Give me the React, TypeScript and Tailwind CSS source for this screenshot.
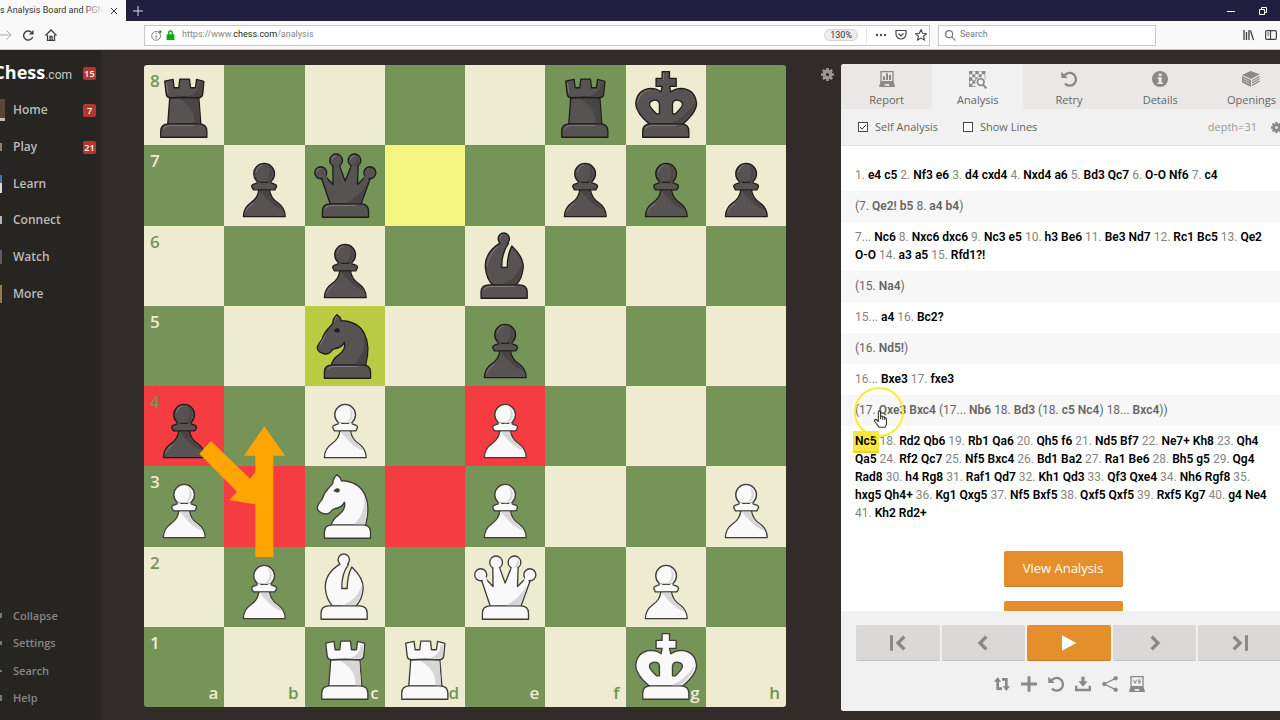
import type { ReactNode } from "react";
import clsx from "clsx";

type Kind = "p" | "r" | "n" | "b" | "q" | "k";

const files = ["a", "b", "c", "d", "e", "f", "g", "h"];
const ranks = [8, 7, 6, 5, 4, 3, 2, 1];

// upper case = white, lower case = black
const position = [
  "r....rk.",
  ".pq..ppp",
  "..p.b...",
  "..n.p...",
  "p.P.P...",
  "P.N.P..P",
  ".PB.Q.P.",
  "..RR..K.",
];

const highlights: Record<string, string> = {
  d7: "bg-[#f5f682]",
  c5: "bg-[#b9ca43]",
  a4: "bg-[#f43c41]",
  e4: "bg-[#f43c41]",
  b3: "bg-[#f43c41]",
  d3: "bg-[#f43c41]",
};

const navItems = [
  { label: "Home", badge: "7", mark: "h-[22px] w-[5px] bg-[#5b4536] border-b-3 border-[#c9bdb3]" },
  { label: "Play", badge: "21", mark: "h-[8px] w-[2px] bg-[#8d806c]" },
  { label: "Learn", mark: "h-[18px] w-[2px] bg-[#d5ddd5] border-t-8 border-[#4a6ea8]" },
  { label: "Connect", mark: "h-[8px] w-[2px] bg-[#b5b5b4]" },
  { label: "Watch", mark: "h-[14px] w-[2px] bg-[#5e5d5b]" },
  { label: "More", mark: "h-[18px] w-[2px] bg-[#8f7a52]" },
];

const footerItems = [
  { label: "Collapse", mark: "h-[5px]" },
  { label: "Settings", mark: "h-[4px]" },
  { label: "Search", mark: "h-[2px]" },
  { label: "Help", mark: "h-[6px]" },
];

const moveBlocks = [
  { text: "1. e4 c5 2. Nf3 e6 3. d4 cxd4 4. Nxd4 a6 5. Bd3 Qc7 6. O-O Nf6 7. c4" },
  { text: "(7. Qe2! b5 8. a4 b4)", variation: true },
  { text: "7... Nc6 8. Nxc6 dxc6 9. Nc3 e5 10. h3 Be6 11. Be3 Nd7 12. Rc1 Bc5 13. Qe2\nO-O 14. a3 a5 15. Rfd1?!" },
  { text: "(15. Na4)", variation: true },
  { text: "15... a4 16. Bc2?" },
  { text: "(16. Nd5!)", variation: true },
  { text: "16... Bxe3 17. fxe3" },
  { text: "(17. Qxe3 Bxc4 (17... Nb6 18. Bd3 (18. c5 Nc4) 18... Bxc4))", variation: true, pointer: true },
  {
    text: "Nc5 18. Rd2 Qb6 19. Rb1 Qa6 20. Qh5 f6 21. Nd5 Bf7 22. Ne7+ Kh8 23. Qh4\nQa5 24. Rf2 Qc7 25. Nf5 Bxc4 26. Bd1 Ba2 27. Ra1 Be6 28. Bh5 g5 29. Qg4\nRad8 30. h4 Rg8 31. Raf1 Qd7 32. Kh1 Qd3 33. Qf3 Qxe4 34. Nh6 Rgf8 35.\nhxg5 Qh4+ 36. Kg1 Qxg5 37. Nf5 Bxf5 38. Qxf5 Qxf5 39. Rxf5 Kg7 40. g4 Ne4\n41. Kh2 Rd2+",
    current: "Nc5",
  },
];

function Base({ x = 52 }: { x?: number }) {
  return <path d={`M${x} 216v-18q0-22 24-22h90q24 0 24 22v18z`} />;
}

const shapes: Record<Kind, { body: ReactNode; shade: string; shine: string }> = {
  p: {
    body: (
      <>
        <path d="M105 134Q103 158 82 172Q59 188 59 214H184Q184 188 161 172Q140 158 137 134Z" />
        <circle cx="121" cy="86" r="31" />
        <path d="M104 112L88 118Q83 120 84 125L89 134H153L158 125Q159 120 154 118L138 112Z" />
        <path d="M102 108Q121 124 140 108V118H102Z" stroke="none" />
      </>
    ),
    shade: "M107 136H135Q138 158 158 172Q170 180 176 194Q150 184 134 166Q120 152 107 136ZM132 60Q149 76 142 98Q132 110 118 114Q148 96 132 60Z",
    shine: "M98 80Q101 64 116 60M66 200Q72 184 88 176",
  },
  r: {
    body: (
      <>
        <path d="M78 98L72 178H171L165 98Z" />
        <path d="M63 48L88 43L91 68H105L108 42H137L140 68H155L158 43L180 49L177 84Q176 98 162 98Q121 94 81 98Q68 98 67 84Z" />
        <Base x={51} />
      </>
    ),
    shade: "M108 102H163L169 174H152Q154 130 108 102ZM177 54L174 82Q172 94 160 95L136 93Q166 84 167 54Z",
    shine: "M68 54L72 82M60 190Q66 181 84 181H150",
  },
  n: {
    body: (
      <>
        <path d="M79 178Q84 158 102 146Q124 130 119 108Q112 124 92 127Q82 130 77 138Q66 147 52 141Q36 134 38 122Q42 112 52 100Q58 80 72 66L84 52Q84 38 96 26Q106 32 110 44Q160 46 178 82Q198 120 182 178Z" />
        <Base x={59} />
      </>
    ),
    shade: "M176 84Q194 124 180 174H148Q186 138 176 84Z",
    shine: "M89 47Q90 36 96 31M46 114Q58 96 62 86M68 190Q74 181 92 181H160",
  },
  b: {
    body: (
      <>
        <path d="M104 52C70 74 60 100 62 125Q65 158 84 177H153Q172 158 175 125C177 98 160 78 141 60Q128 84 127 124H111Q110 80 131 52Z" />
        <circle cx="117" cy="38" r="17" />
        <path d="M107 47H127V57H107Z" stroke="none" />
        <Base x={49} />
      </>
    ),
    shade: "M171 112Q174 150 150 174H112Q158 158 171 112Z",
    shine: "M68 118Q70 88 98 62M106 36Q108 28 114 27M58 190Q64 181 82 181H148",
  },
  q: {
    body: (
      <>
        <path d="M50 98L77 178H168L197 98L182 94L158 118L160 58H141L121 108L103 58H84L85 118L62 94Z" />
        <circle cx="48" cy="83" r="18" />
        <circle cx="94" cy="46" r="19" />
        <circle cx="149" cy="46" r="19" />
        <circle cx="195" cy="83" r="18" />
        <path d="M52 93L64 90L68 104L56 108ZM87 58H101L105 70H87ZM142 58H157V72H138ZM181 90L193 94L188 108L176 104Z" stroke="none" />
        <Base x={53} />
      </>
    ),
    shade: "M188 112L166 174H124Q160 158 188 112ZM158 34Q168 50 156 60L144 62Q160 54 158 34Z",
    shine: "M36 80Q38 70 47 70M82 42Q85 33 93 32M137 42Q140 33 148 32M62 190Q68 181 86 181H152",
  },
  k: {
    body: (
      <>
        <path
          fillRule="evenodd"
          d="M109 20H131V40H151V64H131L135 80Q150 70 168 70Q208 74 212 115Q212 142 169 178H72Q30 142 30 115Q34 74 74 70Q92 70 106 80L109 64H91V40H109ZM101 146V116Q98 104 86 105Q68 108 72 122Q76 130 92 146ZM140 146V116Q143 104 155 105Q173 108 169 122Q165 130 149 146Z"
        />
        <Base x={51} />
      </>
    ),
    shade: "M206 112Q204 142 164 174H138Q184 154 206 112Z",
    shine: "M36 112Q40 80 74 75M113 44V25M60 190Q66 181 84 181H150",
  },
};

function Piece({ code }: { code: string }) {
  const kind = code.toLowerCase() as Kind;
  const white = code !== kind;
  const shape = shapes[kind];
  return (
    <svg viewBox="1 0 240 240" className="h-full w-full" strokeLinejoin="round">
      <g fill={white ? "#f9f9f9" : "#565352"} stroke={white ? "#3f3d39" : "#1f1d1c"} strokeWidth="4">
        {shape.body}
      </g>
      <path d={shape.shade} fill={white ? "#d6d6d6" : "#484544"} />
      {!white && <path d={shape.shine} fill="none" stroke="#7b7877" strokeWidth="3" strokeLinecap="round" />}
      {kind === "n" && <path d="M86 75Q94 62 104 69Q108 80 96 79Q90 78 86 75Z" fill={white ? "#3f3d39" : "#1f1d1c"} />}
    </svg>
  );
}

function Board() {
  return (
    <div className="relative grid aspect-square h-full shrink-0 grid-cols-8 grid-rows-8 overflow-hidden rounded-[3px]">
      {ranks.map((rank, r) =>
        files.map((file, f) => {
          const light = (r + f) % 2 === 0;
          const code = position[r][f];
          return (
            <div
              key={file + rank}
              className={clsx(
                "relative min-h-0 min-w-0 text-[17px] leading-5 font-semibold",
                highlights[file + rank] ?? (light ? "bg-[#edecd1]" : "bg-[#769457]"),
                light ? "text-[#769457]" : "text-[#edecd1]",
              )}
            >
              {code !== "." && <Piece code={code} />}
              {f === 0 && <span className="absolute top-1.5 left-1.5">{rank}</span>}
              {r === 7 && <span className="absolute right-1.5 bottom-1">{file}</span>}
            </div>
          );
        }),
      )}
      <svg viewBox="0 0 1926 1926" className="absolute inset-0 h-full w-full" fill="#ffa500">
        <path d="M201 1128L318 1241L340 1215L361 1323L256 1305L279 1280L166 1166Z" />
        <path d="M334 1476V1172H300L361 1084L423 1172H388V1476Z" />
      </svg>
    </div>
  );
}

function Undo({ className }: { className: string }) {
  return (
    <svg viewBox="0 0 48 48" className={className} fill="none" stroke="currentColor" strokeWidth="7">
      <path d="M9 16A19 19 0 1 1 12 38" />
      <path d="M1 2V21H20Z" fill="currentColor" stroke="none" />
    </svg>
  );
}

function Gear({ className }: { className: string }) {
  return (
    <svg viewBox="0 0 24 24" className={className} fill="none" stroke="currentColor">
      <circle cx="12" cy="12" r="6" strokeWidth="6" />
      <path d="M12 0V5M12 19V24M0 12H5M19 12H24M3.500 3.500L7 7M17 17L20.500 20.500M3.500 20.500L7 17M17 7L20.500 3.500" strokeWidth="5" />
    </svg>
  );
}

function ReportIcon() {
  return (
    <svg viewBox="0 0 48 48" className="size-4" fill="currentColor">
      <path fillRule="evenodd" d="M4 0H44V32L48 48H0L4 32ZM8 4V30H40V4ZM18 39L16 44H32L30 39Z" />
      <path d="M12 16H18V27H12ZM21 7H27V27H21ZM30 12H36V27H30Z" />
    </svg>
  );
}

function AnalysisIcon() {
  return (
    <svg viewBox="0 0 54 54" className="size-[18px]" fill="currentColor">
      <path d="M0 0H48V28H0Z" fill="none" stroke="currentColor" strokeWidth="2" />
      <path d="M0 0H10V10H0ZM19 0H29V10H19ZM38 0H48V10H38ZM10 10H19V19H10ZM29 10H38V19H29ZM0 19H10V29H0ZM19 19H29V29H19ZM10 29H19V38H10ZM0 38H10V48H0ZM0 28H2V48H0ZM10 46H20V48H10Z" />
      <circle cx="35" cy="33" r="15" fill="#f1f1f1" />
      <circle cx="35" cy="33" r="10" fill="none" stroke="currentColor" strokeWidth="5" />
      <path d="M42 41L52 52" stroke="currentColor" strokeWidth="6" />
    </svg>
  );
}

function InfoIcon() {
  return (
    <svg viewBox="0 0 48 48" className="size-4">
      <circle cx="24" cy="24" r="24" fill="currentColor" />
      <path d="M20 8H29V15H20ZM17 19H29V35H33V39H16V35H20V23H17Z" fill="#e9e8e7" />
    </svg>
  );
}

function BooksIcon() {
  return (
    <svg viewBox="0 0 54 48" className="h-4 w-[18px]" fill="currentColor">
      <path d="M0 12L26 0L53 10L28 24Z" />
      <path d="M0 15L27 27V48L0 34Z" />
      <path d="M30 27L53 14V18L30 31ZM30 34L53 21V25L30 38ZM30 41L53 28V32L30 46Z" />
      <path d="M4 22L22 31M4 29L22 38" stroke="#e9e8e7" strokeWidth="2" />
    </svg>
  );
}

const tabs = [
  { label: "Report", icon: <ReportIcon /> },
  { label: "Analysis", icon: <AnalysisIcon />, active: true },
  { label: "Retry", icon: <Undo className="size-4" /> },
  { label: "Details", icon: <InfoIcon /> },
  { label: "Openings", icon: <BooksIcon /> },
];

const controls = [
  { label: "First move", path: "M4 1V47M43 5L24 24L43 43" },
  { label: "Previous move", path: "M34 5L15 24L34 43" },
  { label: "Play", play: true },
  { label: "Next move", path: "M14 5L33 24L14 43" },
  { label: "Last move", path: "M5 5L24 24L5 43M44 1V47" },
];

const tools = [
  {
    label: "Flip board",
    icon: (
      <svg viewBox="0 0 48 48" className="size-4" fill="currentColor">
        <path d="M11 3L22 17H15V34H24V42H7V17H0ZM37 45L26 31H33V14H24V6H41V31H48Z" />
      </svg>
    ),
  },
  {
    label: "New analysis",
    icon: (
      <svg viewBox="0 0 48 48" className="size-4" stroke="currentColor" strokeWidth="9">
        <path d="M24 1V47M0 24H48" />
      </svg>
    ),
  },
  { label: "Restart", icon: <Undo className="size-4" /> },
  {
    label: "Download",
    icon: (
      <svg viewBox="0 0 48 48" className="size-4" fill="currentColor">
        <path d="M19 2H29V16H38L24 32L10 16H19ZM0 29H7V38H41V29H48V46H0Z" />
      </svg>
    ),
  },
  {
    label: "Share",
    icon: (
      <svg viewBox="0 0 48 48" className="size-4" fill="currentColor" stroke="currentColor">
        <path d="M41 7L7 24L41 41" fill="none" strokeWidth="4" />
        <circle cx="41" cy="7" r="6" />
        <circle cx="7" cy="24" r="6" />
        <circle cx="41" cy="41" r="6" />
      </svg>
    ),
  },
  {
    label: "Play computer",
    icon: (
      <svg viewBox="0 0 48 48" className="size-4" fill="currentColor">
        <path fillRule="evenodd" d="M4 0H44V32L48 48H0L4 32ZM8 4V30H40V4ZM18 39L16 44H32L30 39Z" />
        <path d="M13 11L18 22L23 11M35 12H28V16.500H34V21H26" fill="none" stroke="currentColor" strokeWidth="3" />
      </svg>
    ),
  },
];

function Moves({ text, variation, current }: { text: string; variation?: boolean; current?: string }) {
  return (
    <>
      {text.split("\n").map((line) => (
        <span key={line} className="block whitespace-nowrap">
          {line.split(" ").map((token, i) => {
            const [, open, word, close] = token.match(/^(\(*)(.*?)(\)*)$/) ?? ["", "", token, ""];
            const isNumber = /^\d+\./.test(word);
            return (
              <span key={i}>
                {i > 0 && " "}
                {open}
                <span
                  className={clsx(
                    !isNumber && "font-semibold",
                    !isNumber && (variation ? "text-[#666564]" : "text-black"),
                    word === current && "-mx-0.5 border-b-2 border-[#e8d32e] bg-[#fbe83c] px-0.5 py-[3px]",
                  )}
                >
                  {word}
                </span>
                {close}
              </span>
            );
          })}
        </span>
      ))}
    </>
  );
}

function Pointer() {
  return (
    <div className="pointer-events-none absolute -top-2 left-[13px] z-10 size-[50px] rounded-full border-2 border-[#f5ee30]">
      <svg viewBox="0 0 36 50" className="absolute top-[21px] left-[18px] h-[18px] w-[13px]" fill="#fff" stroke="#333" strokeWidth="3" strokeLinejoin="round">
        <path d="M12 28V5Q15 0 18 5V18Q23 15 24 20Q29 17 30 22Q34 20 35 26V36Q34 44 30 48H14Q10 42 2 32Q0 26 6 26L12 32Z" />
        <path d="M18 18V26M24 20V27M30 22V28" />
      </svg>
    </div>
  );
}

function Check({ label, checked }: { label: string; checked?: boolean }) {
  return (
    <label className="flex items-center gap-[7px]">
      <span className="grid place-items-center">
        <input type="checkbox" defaultChecked={checked} className="peer col-start-1 row-start-1 size-2.5 appearance-none border border-[#4b4a49] bg-white" />
        <svg viewBox="0 0 10 10" className="col-start-1 row-start-1 hidden size-2.5 peer-checked:block" fill="none" stroke="#333">
          <path d="M2 5L4 7L8 3" />
        </svg>
      </span>
      {label}
    </label>
  );
}

function BrowserChrome() {
  return (
    <header className="shrink-0 font-[Roboto,sans-serif] text-[9px]">
      <div className="flex h-[21px] items-center bg-[#201f40]">
        <div className="flex h-full w-[126px] shrink-0 items-center justify-end gap-1.5 overflow-hidden bg-[#f9f9fa] pr-2 text-[#333]">
          <span className="relative whitespace-nowrap">
            Chess Analysis Board and PGN
            <span className="absolute inset-y-0 right-0 w-5 bg-linear-to-r from-transparent to-[#f9f9fa]" />
          </span>
          <button aria-label="Close tab">
            <svg viewBox="0 0 8 8" className="size-2" stroke="#333">
              <path d="M1 1L7 7M7 1L1 7" />
            </svg>
          </button>
        </div>
        <button aria-label="New tab" className="ml-[7px]">
          <svg viewBox="0 0 10 10" className="size-2.5" stroke="#d8d8e0">
            <path d="M5 0V10M0 5H10" />
          </svg>
        </button>
        <div className="ml-auto flex gap-6 pr-[13px]">
          <button aria-label="Minimize">
            <svg viewBox="0 0 8 8" className="size-2" stroke="#fff">
              <path d="M0 4.500H8" />
            </svg>
          </button>
          <button aria-label="Restore">
            <svg viewBox="0 0 8 8" className="size-2" fill="none" stroke="#fff">
              <path d="M.5 2.500H5.500V7.500H.5ZM2.500 2.500V.5H7.500V5.500H5.500" />
            </svg>
          </button>
        </div>
      </div>
      <div className="flex h-[29px] items-center border-b border-[#c9c9cb] bg-[#f9f9fa] text-[#6d6d70]">
        <div className="flex w-[144px] items-center gap-[11px] text-[#3c3c3e]">
          <button aria-label="Forward">
            <svg viewBox="0 0 12 12" className="size-3" fill="none" stroke="#aaa">
              <path d="M0 6H11M6.500 1.500L11 6L6.500 10.500" />
            </svg>
          </button>
          <button aria-label="Reload">
            <svg viewBox="0 0 12 12" className="size-[11px]" fill="none" stroke="currentColor" strokeWidth="1.500">
              <path d="M10.500 7.500A5 5 0 1 1 9 2.300" />
              <path d="M11.500 0V5H6.500Z" fill="currentColor" stroke="none" />
            </svg>
          </button>
          <button aria-label="Home">
            <svg viewBox="0 0 12 12" className="size-3" fill="none" stroke="currentColor" strokeWidth="1.300">
              <path d="M.5 6.500L6 1L11.500 6.500M2.500 6V11.300H9.500V6M5 11V7.500H7V11" />
            </svg>
          </button>
        </div>
        <div className="flex h-[21px] flex-1 items-center border border-[#c8c8ca] bg-white pr-0.5">
          <svg viewBox="0 0 30 30" className="ml-1.5 size-[11px]" fill="none" stroke="#777" strokeWidth="2.500">
            <circle cx="14" cy="16" r="12" />
            <path d="M14 14V23M14 8V11" strokeWidth="3" />
            <circle cx="25" cy="5" r="3" fill="#555" />
          </svg>
          <svg viewBox="0 0 24 28" className="ml-1 h-[10px] w-[9px]" fill="#12a912">
            <path fillRule="evenodd" d="M5 12V8A7 7 0 0 1 19 8V12H23V28H1V12ZM9 12H15V8A3 3 0 0 0 9 8Z" />
          </svg>
          <span className="ml-[7px] flex-1 text-[#85858a]">
            https://www.<span className="text-[#222]">chess.com</span>/analysis
          </span>
          <span className="rounded-full border border-[#d5d5d8] bg-[#ededf0] px-[5px] leading-[10px] text-[#333]">130%</span>
          <span className="mx-2 h-4 border-l border-[#e3e3e6]" />
          <div className="flex items-center gap-2 text-[#4a4a4d]">
            <svg viewBox="0 0 12 12" className="size-3" fill="currentColor">
              <circle cx="2" cy="6" r="1.200" />
              <circle cx="6" cy="6" r="1.200" />
              <circle cx="10" cy="6" r="1.200" />
            </svg>
            <svg viewBox="0 0 12 12" className="size-3" fill="none" stroke="currentColor" strokeWidth="1.200">
              <path d="M1 1.500H11V5A5 5 0 0 1 1 5ZM3.500 4.500L6 7L8.500 4.500" />
            </svg>
            <svg viewBox="0 0 12 12" className="size-3" fill="none" stroke="currentColor" strokeWidth="1.200">
              <path d="M6 .8L7.600 4.300L11.400 4.700L8.600 7.300L9.400 11L6 9.100L2.600 11L3.400 7.300L.6 4.700L4.400 4.300Z" />
            </svg>
          </div>
        </div>
        <div className="ml-2 flex h-[21px] w-[218px] items-center gap-1 border border-[#c8c8ca] bg-white pl-1.5">
          <svg viewBox="0 0 12 12" className="size-[11px] shrink-0" fill="none" stroke="#777" strokeWidth="1.200">
            <circle cx="4.500" cy="4.500" r="3.800" />
            <path d="M7.300 7.300L11.500 11.500" />
          </svg>
          <input aria-label="Search" placeholder="Search" className="w-full min-w-0 bg-transparent outline-none placeholder:text-[#77777a]" />
        </div>
        <div className="flex w-[124px] items-center justify-end gap-[11px] pr-[3px] text-[#3c3c3e]">
          <svg viewBox="0 0 11 12" className="h-3 w-[11px]" fill="none" stroke="currentColor" strokeWidth="1.300">
            <path d="M1 1V11M3.500 3V11M6 1V11M7.500 1.500L10.500 11" />
          </svg>
          <svg viewBox="0 0 12 12" className="size-3" fill="none" stroke="currentColor" strokeWidth="1.200">
            <rect x=".6" y="1.600" width="10.800" height="8.800" rx="1.500" />
            <path d="M5.500 1.500V10.500M2.300 4H4M2.300 6H4" />
          </svg>
        </div>
      </div>
    </header>
  );
}

function Badge({ children }: { children: ReactNode }) {
  return <span className="size-[13px] rounded-[2px] bg-[#b33633] text-center text-[9px] leading-[13px] font-semibold text-white">{children}</span>;
}

function Sidebar() {
  return (
    <nav className="flex w-[101px] shrink-0 flex-col bg-[#262522] pt-3 pb-2 text-[12px] font-semibold text-[#bcbbb9]">
      <div className="flex h-[22px] items-center justify-between pr-[5px]">
        <a href="#" className="flex w-[72px] items-baseline justify-end text-[18px] leading-5 font-bold text-white">
          Chess<span className="font-[Roboto,sans-serif] text-[12px] font-normal text-[#c9c8c6]">.com</span>
        </a>
        <Badge>15</Badge>
      </div>
      <ul className="mt-2 flex h-[220px] flex-col">
        {navItems.map((item) => (
          <li key={item.label} className="flex flex-1 items-center pr-[5px]">
            <span className="flex w-[13px] shrink-0">
              <span className={item.mark} />
            </span>
            <a href="#" className="flex-1">
              {item.label}
            </a>
            {item.badge && <Badge>{item.badge}</Badge>}
          </li>
        ))}
      </ul>
      <ul className="mt-auto flex h-[110px] flex-col text-[11px] text-[#888785]">
        {footerItems.map((item) => (
          <li key={item.label} className="flex flex-1 items-center">
            <span className="flex w-[13px] shrink-0">
              <span className={clsx("w-[2px] bg-[#777674]", item.mark)} />
            </span>
            <a href="#">{item.label}</a>
          </li>
        ))}
      </ul>
    </nav>
  );
}

function AnalysisPanel() {
  return (
    <section className="flex min-w-[456px] flex-1 flex-col overflow-hidden rounded-[3px] bg-white text-[11px] text-[#666564]">
      <div className="flex h-[45px] shrink-0 bg-[#e9e8e7]">
        {tabs.map((tab) => (
          <button key={tab.label} className={clsx("flex flex-1 flex-col items-center pt-[7px]", tab.active && "bg-[#f1f1f1]")}>
            <span className="flex h-[18px] items-start text-[#8b8987]">{tab.icon}</span>
            <span className="mt-[3px] leading-4">{tab.label}</span>
          </button>
        ))}
      </div>
      <div className="flex h-[37px] shrink-0 items-center gap-[25px] border-b border-[#e3e2e1] bg-[#f1f1f1] pr-[15px] pl-[17px]">
        <Check label="Self Analysis" checked />
        <Check label="Show Lines" />
        <span className="ml-auto text-[#999896]">depth=31</span>
        <button aria-label="Engine settings" className="-ml-[11px] text-[#8b8987]">
          <Gear className="size-[11px]" />
        </button>
      </div>
      <div className="min-h-0 flex-1 overflow-hidden pt-3.5 pr-3">
        {moveBlocks.map((block) => (
          <div
            key={block.text}
            className={clsx(
              "relative pt-1.5 pb-[7px] pl-3.5 font-[Roboto,sans-serif] text-[12px] leading-[18px]",
              block.variation ? "-mr-3 bg-[#f7f7f7]" : "text-[#858482]",
            )}
          >
            <Moves text={block.text} variation={block.variation} current={block.current} />
            {block.pointer && <Pointer />}
          </div>
        ))}
        <div className="mt-[22px] flex flex-col items-center gap-3.5 text-[13px] text-white">
          <button className="h-9 w-[119px] rounded-[2px] border-b border-[#c27b25] bg-[#e48f2b]">View Analysis</button>
          <button aria-label="More analysis" className="h-9 w-[119px] rounded-[2px] border-b border-[#c27b25] bg-[#e48f2b]" />
        </div>
      </div>
      <footer className="h-[100px] shrink-0 bg-[#f1f1f1] px-[15px] pt-3.5">
        <div className="flex gap-0.5">
          {controls.map((c) => (
            <button
              key={c.label}
              aria-label={c.label}
              className={clsx(
                "flex h-9 flex-1 items-center justify-center rounded-[2px] border-b",
                c.play ? "border-[#c27b25] bg-[#e48f2b] text-white" : "border-[#c4c3c2] bg-[#dad9d8] text-[#8b8987]",
              )}
            >
              <svg viewBox="0 0 48 48" className="size-4" fill="none" stroke="currentColor" strokeWidth="10">
                {c.play ? <path d="M3 1L46 24L3 47Z" fill="currentColor" stroke="none" /> : <path d={c.path} />}
              </svg>
            </button>
          ))}
        </div>
        <div className="mt-[15px] flex justify-center gap-[11px] text-[#8b8987]">
          {tools.map((t) => (
            <button key={t.label} aria-label={t.label}>
              {t.icon}
            </button>
          ))}
        </div>
      </footer>
    </section>
  );
}

export default function App() {
  return (
    <div className="flex h-screen flex-col overflow-hidden bg-[#312c2a] font-['Open_Sans','Noto_Sans',sans-serif]">
      <BrowserChrome />
      <div className="flex min-h-0 flex-1">
        <Sidebar />
        <main className="flex min-w-0 flex-1 overflow-hidden pl-[43px]">
          <div className="flex shrink-0 pt-[15px] pb-[13px]">
            <Board />
          </div>
          <div className="flex w-[55px] shrink-0 justify-end pt-[18px] pr-[7px]">
            <button aria-label="Board settings" className="h-[13px] text-[#9b9894]">
              <Gear className="size-[13px]" />
            </button>
          </div>
          <div className="flex flex-1 pt-3.5 pb-[9px]">
            <AnalysisPanel />
          </div>
        </main>
      </div>
    </div>
  );
}
